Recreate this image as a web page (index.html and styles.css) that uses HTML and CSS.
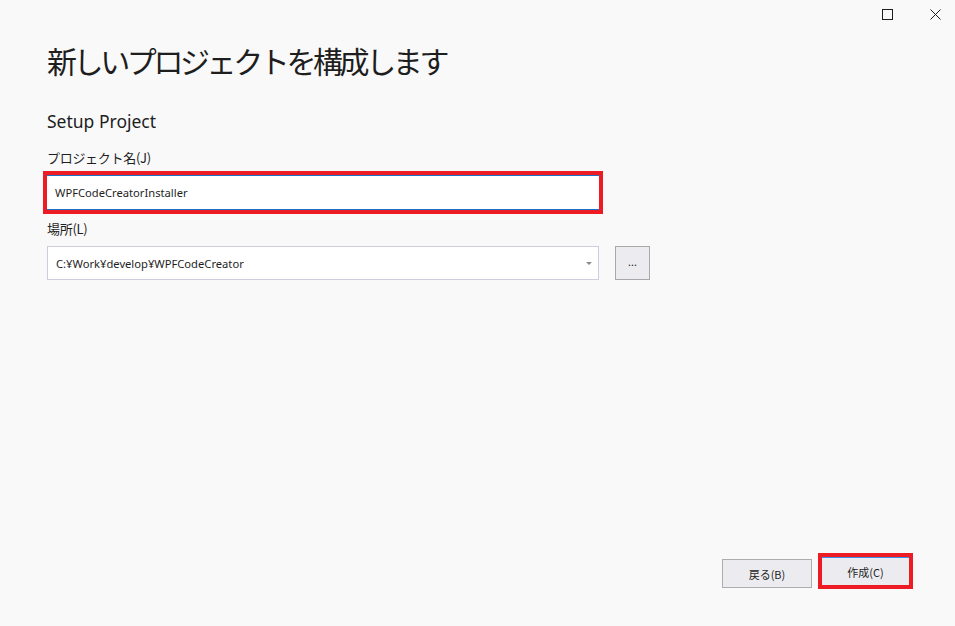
FILE: index.html
```html
<!DOCTYPE html>
<html lang="ja">

<head>
    <meta charset="UTF-8">
    <meta name="viewport" content="width=device-width, initial-scale=1.0">
    <title>新しいプロジェクトを構成します</title>
    <link rel="stylesheet" href="styles.css">
</head>

<body>
    <div class="dialog">
        <div class="title-bar">
            <button class="win-button" title="最大化">
                <svg width="11" height="11" viewBox="0 0 11 11">
                    <rect x="0.5" y="0.5" width="10" height="10" fill="none" stroke="#1e1e1e" stroke-width="1" />
                </svg>
            </button>
            <button class="win-button" title="閉じる">
                <svg width="11" height="11" viewBox="0 0 11 11">
                    <path d="M0.5 0.5 L10.5 10.5 M10.5 0.5 L0.5 10.5" stroke="#1e1e1e" stroke-width="1" />
                </svg>
            </button>
        </div>

        <div class="content">
            <h1 class="page-title">新しいプロジェクトを構成します</h1>
            <h2 class="template-name">Setup Project</h2>

            <div class="field">
                <label class="field-label" for="project-name">プロジェクト名(J)</label>
                <div class="highlight field-highlight">
                    <input class="text-box" id="project-name" type="text" value="WPFCodeCreatorInstaller">
                </div>
            </div>

            <div class="field field-location">
                <label class="field-label" for="location">場所(L)</label>
                <div class="location-row">
                    <div class="combo-box" id="location">
                        <span class="combo-text">C:¥Work¥develop¥WPFCodeCreator</span>
                        <svg class="combo-arrow" width="6" height="3" viewBox="0 0 6 3">
                            <path d="M0 0 L6 0 L3 3 Z" fill="#8a8a8a" />
                        </svg>
                    </div>
                    <button class="browse-button">...</button>
                </div>
            </div>
        </div>

        <div class="footer">
            <button class="dialog-button">戻る(B)</button>
            <div class="highlight button-highlight">
                <button class="dialog-button primary">作成(C)</button>
            </div>
        </div>
    </div>
</body>

</html>
```

FILE: styles.css
```css
* {
    box-sizing: border-box;
}

html,
body {
    margin: 0;
    height: 100%;
}

body {
    background-color: #f9f9f9;
    color: #1e1e1e;
    font-family: "Noto Sans", "Noto Sans CJK JP", sans-serif;
}

.dialog {
    height: 100%;
    display: flex;
    flex-direction: column;
}

.title-bar {
    display: flex;
    justify-content: flex-end;
    gap: 8px;
}

.win-button {
    width: 40px;
    height: 28px;
    border: none;
    background: none;
    padding: 0;
    display: flex;
    align-items: center;
    justify-content: center;
}

.content {
    padding-left: 47px;
}

.page-title {
    margin: 10px 0 0 0;
    font-family: "Noto Sans CJK JP", sans-serif;
    font-weight: 400;
    font-size: 30px;
    letter-spacing: -3.4px;
    line-height: 44px;
}

.template-name {
    margin: 26px 0 0 0;
    font-weight: 400;
    font-size: 17.5px;
    line-height: 26px;
}

.field {
    margin-top: 16px;
}

.field-location {
    margin-top: 7px;
}

.field-label {
    display: block;
    font-family: "Noto Sans CJK JP", sans-serif;
    font-size: 13px;
    line-height: 16px;
    letter-spacing: -0.3px;
}

.highlight {
    border: 4px solid #ed1c24;
}

.field-highlight {
    width: 560px;
    margin: 5px 0 0 -4px;
}

.text-box {
    display: block;
    width: 100%;
    height: 35px;
    border: none;
    border-top: 1px solid #1a73c8;
    border-bottom: 1px solid #1a73c8;
    background: white;
    padding: 0 8px;
    font-family: "Noto Sans", sans-serif;
    font-size: 11.2px;
    color: #1e1e1e;
    outline: none;
}

.location-row {
    margin-top: 9px;
    display: flex;
    align-items: center;
    gap: 16px;
}

.combo-box {
    width: 552px;
    height: 34px;
    background: white;
    border: 1px solid #cccedb;
    display: flex;
    align-items: center;
    justify-content: space-between;
    padding: 0 6px 0 8px;
    font-size: 11.2px;
}

.combo-arrow {
    margin-top: 1px;
}

.browse-button {
    width: 35px;
    height: 34px;
    background: #ececf0;
    border: 1px solid #a8a8a8;
    font-family: "Noto Sans", sans-serif;
    font-size: 11px;
    color: #1e1e1e;
    padding: 0 0 4px 0;
}

.footer {
    margin-top: auto;
    display: flex;
    justify-content: flex-end;
    align-items: flex-end;
    gap: 6px;
    padding: 0 42px 38px 0;
}

.dialog-button {
    width: 90px;
    height: 29px;
    background: #ececf0;
    border: 1px solid #adadad;
    font-family: "Noto Sans CJK JP", sans-serif;
    font-size: 11px;
    color: #1e1e1e;
    padding: 0;
}

.button-highlight {
    margin-bottom: -1px;
}

.dialog-button.primary {
    width: 87px;
    height: 28px;
    border: none;
    border-top: 1px solid #3a8ee6;
}
```
